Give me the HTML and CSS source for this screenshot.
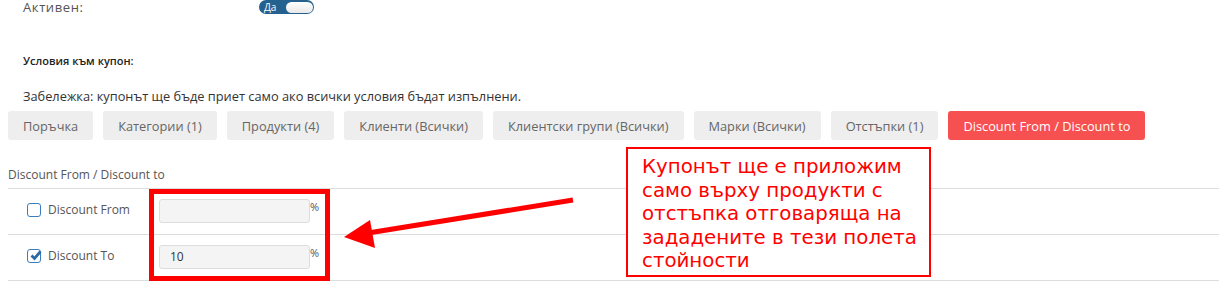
FILE: index.html
```html
<!DOCTYPE html>
<html lang="bg">
<head>
    <meta charset="UTF-8">
    <title>Купон - условия</title>
    <link rel="stylesheet" href="styles.css">
</head>
<body>
    <div class="page">
        <!-- Active switch -->
        <div class="active-row">
            <span class="active-label">Активен:</span>
            <span class="switch">
                <span class="switch-text">Да</span>
                <span class="switch-knob"></span>
            </span>
        </div>

        <h4 class="conditions-title">Условия към купон:</h4>
        <p class="note">Забележка: купонът ще бъде приет само ако всички условия бъдат изпълнени.</p>

        <!-- Condition tabs -->
        <nav class="tabs">
            <a class="tab">Поръчка</a>
            <a class="tab">Категории (1)</a>
            <a class="tab">Продукти (4)</a>
            <a class="tab">Клиенти (Всички)</a>
            <a class="tab">Клиентски групи (Всички)</a>
            <a class="tab">Марки (Всички)</a>
            <a class="tab">Отстъпки (1)</a>
            <a class="tab tab-active">Discount From / Discount to</a>
        </nav>

        <!-- Discount range -->
        <div class="section-label">Discount From / Discount to</div>
        <div class="discount-list">
            <div class="discount-row">
                <span class="check"></span>
                <span class="row-label">Discount From</span>
                <input class="row-input" type="text" value="">
                <span class="unit">%</span>
            </div>
            <div class="discount-row">
                <span class="check check-on">
                    <svg width="13" height="13" viewBox="0 0 13 13"><path d="M2.5 6.5 L5.5 9.5 L11.5 2.5" fill="none" stroke="#2b6aa3" stroke-width="2.8"/></svg>
                </span>
                <span class="row-label">Discount To</span>
                <input class="row-input" type="text" value="10">
                <span class="unit">%</span>
            </div>
        </div>

        <!-- Annotation overlay -->
        <div class="highlight-box"></div>
        <svg class="arrow" width="1219" height="295" viewBox="0 0 1219 295">
            <line x1="573" y1="200" x2="368" y2="233" stroke="#ff0000" stroke-width="5"/>
            <polygon points="344,237 370,220 375,248" fill="#ff0000"/>
        </svg>
        <div class="callout">Купонът ще е приложим само върху продукти с отстъпка отговаряща на зададените в тези полета стойности</div>
    </div>
</body>
</html>
```

FILE: styles.css
```css
/* Base */
body {
    margin: 0;
    padding: 0;
    background-color: #fff;
    font-family: 'Open Sans', 'Liberation Sans', sans-serif;
    color: #555;
    overflow: hidden;
}

.page {
    position: relative;
    width: 1219px;
    height: 295px;
}

/* Active switch */
.active-row {
    display: flex;
    align-items: center;
    height: 14px;
    padding-left: 23px;
}

.active-label {
    width: 236px;
    font-size: 13px;
    line-height: 14px;
    letter-spacing: 0.6px;
    color: #555;
}

.switch {
    display: flex;
    align-items: center;
    justify-content: space-between;
    box-sizing: border-box;
    width: 55px;
    height: 14px;
    padding: 0 1px 0 5px;
    background-color: #24618f;
    border-radius: 8px;
}

.switch-text {
    color: #fff;
    font-size: 10px;
    line-height: 12px;
}

.switch-knob {
    width: 27px;
    height: 11px;
    background: linear-gradient(#fff, #e8e8e8);
    border-radius: 6px;
}

/* Titles */
.conditions-title {
    margin: 39px 0 0 23px;
    font-size: 11px;
    line-height: 16px;
    font-weight: 600;
    color: #222;
}

.note {
    margin: 19px 0 0 23px;
    font-size: 12.8px;
    line-height: 16px;
    color: #333;
}

/* Tabs */
.tabs {
    display: flex;
    gap: 10px;
    margin-top: 7px;
    padding-left: 8px;
}

.tab {
    display: flex;
    align-items: center;
    height: 29px;
    padding: 0 15px;
    background-color: #eee;
    border-radius: 3px;
    font-size: 12.8px;
    color: #666;
    white-space: nowrap;
}

.tab-active {
    background-color: #f75050;
    color: #fff;
}

/* Discount section */
.section-label {
    margin: 27px 0 0 8px;
    padding-bottom: 5px;
    font-size: 12px;
    line-height: 16px;
    color: #555;
}

.discount-list {
    margin-left: 8px;
    border-top: 1px solid #ddd;
}

.discount-row {
    display: flex;
    align-items: center;
    height: 45px;
    padding-left: 19px;
    border-bottom: 1px solid #ddd;
}

.check {
    display: flex;
    align-items: center;
    justify-content: center;
    box-sizing: border-box;
    width: 14px;
    height: 14px;
    margin: -4px 7px 0 0;
    border: 1.5px solid #3a7dbf;
    border-radius: 3px;
}

.check-on svg {
    margin: 0 -2px 0 0;
}

.row-label {
    width: 111px;
    margin-top: -5px;
    font-size: 12px;
    color: #555;
}

.row-input {
    box-sizing: border-box;
    width: 151px;
    height: 24px;
    margin: -2px 0 0;
    padding: 0 10px;
    background-color: #f4f4f4;
    border: 1px solid #ddd;
    border-radius: 3px;
    font-family: inherit;
    font-size: 12px;
    color: #333;
}

.unit {
    align-self: flex-start;
    margin-top: 10px;
    font-size: 11px;
    color: #555;
}

/* Annotation overlay */
.highlight-box {
    position: absolute;
    left: 149px;
    top: 189px;
    width: 181px;
    height: 92px;
    box-sizing: border-box;
    border: 5px solid #ff0000;
}

.arrow {
    position: absolute;
    left: 0;
    top: 0;
    pointer-events: none;
}

.callout {
    position: absolute;
    left: 626px;
    top: 147px;
    width: 305px;
    height: 130px;
    box-sizing: border-box;
    padding: 6px 0 0 14px;
    border: 2px solid #ff0000;
    background-color: #fff;
    font-family: 'DejaVu Sans', sans-serif;
    font-size: 19.8px;
    line-height: 23.5px;
    color: #ff0000;
}
```
